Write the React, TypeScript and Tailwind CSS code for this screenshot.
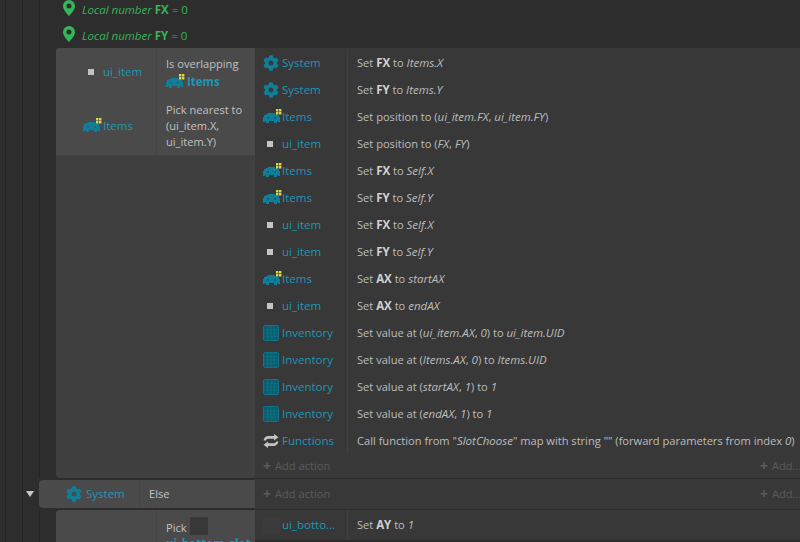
import React from 'react';
import { FaCog } from 'react-icons/fa';

const font = 'font-["Open_Sans","Noto_Sans",sans-serif]';

const Gear = () => <FaCog className="w-[16px] h-[16px] shrink-0 text-[#0f7f99]" />;

const Invader = ({ bg = '#383838' }: { bg?: string }) => (
  <svg viewBox="0 0 19 15" className="w-[19px] h-[15px] shrink-0">
    <path
      fill="#0f7f99"
      d="M5 4h7v1h2v1h2v2h1v5h-2v-1h-1v2h-3v-2H6v2H3v-2H2v1H0V8h1V6h2V5h2z"
    />
    <rect x="4" y="8" width="2" height="1.500" fill={bg} opacity="0.700" />
    <rect x="11" y="8" width="2" height="1.500" fill={bg} opacity="0.700" />
    <path fill="#d6d84a" d="M13 0h2.400v2.400H13zM16 0h2.400v2.400H16zM13 3h2.400v2.400H13zM16 3h2.400v2.400H16z" />
  </svg>
);

const Dot = () => (
  <span className="w-[14px] shrink-0 flex justify-center">
    <span className="w-[6px] h-[6px] bg-[#c4c4c4]" />
  </span>
);

const Grid = () => (
  <svg viewBox="0 0 16 16" className="w-[16px] h-[16px] shrink-0">
    <rect x="0.500" y="0.500" width="15" height="15" rx="1.500" fill="#0c5a6d" stroke="#0f7488" />
    <path stroke="#0f7488" strokeWidth="0.900" d="M4.800 1v14M8 1v14M11.200 1v14M1 4.800h14M1 8h14M1 11.200h14" />
  </svg>
);

const Loop = () => (
  <svg viewBox="0 0 16 14" className="w-[16px] h-[14px] shrink-0" fill="#c4c4c4">
    <path d="M11 0l4.500 3.200L11 6.400V4.700H5.500C4 4.700 3.100 5.400 2.600 6.800L.6 6.200C1.200 3.500 3 2 5.300 2H11z" />
    <path d="M5 14L.5 10.800 5 7.600v1.700h5.500c1.500 0 2.400-.7 2.900-2.100l2 .6C14.800 10.500 13 12 10.700 12H5z" />
  </svg>
);

type Obj = 'system' | 'items' | 'ui' | 'inv' | 'fn';

const objects: Record<Obj, { name: string; icon: React.ReactNode }> = {
  system: { name: 'System', icon: <Gear /> },
  items: { name: 'Items', icon: <Invader /> },
  ui: { name: 'ui_item', icon: <Dot /> },
  inv: { name: 'Inventory', icon: <Grid /> },
  fn: { name: 'Functions', icon: <Loop /> },
};

const B = ({ children }: { children: React.ReactNode }) => (
  <b className="font-bold text-[#d2d2d2] text-[11.500px]">{children}</b>
);
const I = ({ children }: { children: React.ReactNode }) => <i className="italic text-[11.500px]">{children}</i>;

const actions: { obj: Obj; text: React.ReactNode }[] = [
  { obj: 'system', text: <>Set <B>FX</B> to <I>Items.X</I></> },
  { obj: 'system', text: <>Set <B>FY</B> to <I>Items.Y</I></> },
  { obj: 'items', text: <>Set position to (<I>ui_item.FX</I>, <I>ui_item.FY</I>)</> },
  { obj: 'ui', text: <>Set position to (<I>FX</I>, <I>FY</I>)</> },
  { obj: 'items', text: <>Set <B>FX</B> to <I>Self.X</I></> },
  { obj: 'items', text: <>Set <B>FY</B> to <I>Self.Y</I></> },
  { obj: 'ui', text: <>Set <B>FX</B> to <I>Self.X</I></> },
  { obj: 'ui', text: <>Set <B>FY</B> to <I>Self.Y</I></> },
  { obj: 'items', text: <>Set <B>AX</B> to <I>startAX</I></> },
  { obj: 'ui', text: <>Set <B>AX</B> to <I>endAX</I></> },
  { obj: 'inv', text: <>Set value at (<I>ui_item.AX</I>, <I>0</I>) to <I>ui_item.UID</I></> },
  { obj: 'inv', text: <>Set value at (<I>Items.AX</I>, <I>0</I>) to <I>Items.UID</I></> },
  { obj: 'inv', text: <>Set value at (<I>startAX</I>, <I>1</I>) to <I>1</I></> },
  { obj: 'inv', text: <>Set value at (<I>endAX</I>, <I>1</I>) to <I>1</I></> },
  {
    obj: 'fn',
    text: <>Call function from "<I>SlotChoose</I>" map with string "" (forward parameters from index <I>0</I>)</>,
  },
];

const Guides = ({ wide = true }: { wide?: boolean }) => (
  <div className={`flex shrink-0 h-full ${wide ? 'w-[56px]' : 'w-[39px]'}`}>
    <div className="w-[6px] h-full border-r border-[#232323]" />
    <div className="w-[17px] h-full border-r border-[#232323]" />
    <div className={`h-full ${wide ? 'w-[17px] border-r border-[#232323]' : 'w-[16px]'}`} />
  </div>
);

const LocalVar = ({ name }: { name: string }) => (
  <div className="h-[26px] shrink-0 flex items-center">
    <Guides />
    <svg viewBox="0 0 12 16" className="w-[12px] h-[16px] ml-[7px] mb-[3px] shrink-0">
      <path
        fill="#35b65a"
        fillRule="evenodd"
        d="M6 0a6 6 0 0 1 6 6c0 3.600-4 8-6 10C4 14 0 9.600 0 6a6 6 0 0 1 6-6zm0 3.500a2.500 2.500 0 1 0 0 5 2.500 2.500 0 0 0 0-5z"
      />
    </svg>
    <span className="ml-[7px] pt-[2px] text-[#35b65a] text-[11.500px]">
      <i className="italic">Local number</i> <b className="font-bold">{name}</b> = 0
    </span>
  </div>
);

const ActionRow = ({ obj, text }: { obj: Obj; text: React.ReactNode }) => (
  <div className="h-[27px] flex items-center">
    <div className="w-[93px] h-full flex items-center pl-[8px] border-r border-[#404040] shrink-0">
      <span className="w-[19px] shrink-0 flex justify-start">{objects[obj].icon}</span>
      <span className="text-[#1c97b5] text-[11.500px]">{objects[obj].name}</span>
    </div>
    <div className="pl-[9px] whitespace-nowrap">{text}</div>
  </div>
);

const AddRow = () => (
  <div className="flex-1 flex items-center justify-between pl-[8px] pt-[1px] text-[#5a5a5a]">
    <span className="flex items-center">
      <span className="font-bold text-[14px] leading-none mr-[4px]">+</span>Add action
    </span>
    <span className="w-[40px] flex items-center overflow-hidden whitespace-nowrap">
      <span className="font-bold text-[14px] leading-none mr-[4px]">+</span>Add...
    </span>
  </div>
);

export default function App() {
  return (
    <div className={`w-[800px] h-[542px] overflow-hidden bg-[#2d2d2d] text-[#bdbdbd] text-[11.100px] ${font}`}>
      <div className="h-[22px] flex flex-col">
        <div className="-mt-[4px]">
          <LocalVar name="FX" />
        </div>
      </div>
      <LocalVar name="FY" />

      {/* main event */}
      <div className="h-[430px] flex">
        <Guides />
        <div className="w-[199px] shrink-0 flex flex-col rounded-l-sm bg-[#404040] overflow-hidden">
          <div className="h-[107px] bg-[#4a4a4a] flex">
            <div className="w-[101px] shrink-0 border-r border-[#444444] text-[11.500px]">
              <div className="h-[48px] flex items-center pl-[28px]">
                <Dot />
                <span className="ml-[5px] text-[#1c97b5]">ui_item</span>
              </div>
              <div className="h-[59px] flex items-center pl-[27px]">
                <Invader bg="#4a4a4a" />
                <span className="ml-[1px] text-[#1c97b5]">Items</span>
              </div>
            </div>
            <div className="pl-[9px] pt-[8px] leading-[16px] text-[#c2c2c2]">
              <div>Is overlapping</div>
              <div className="flex items-center h-[19px]">
                <Invader bg="#4a4a4a" />
                <b className="font-bold text-[#1c97b5] text-[11.500px] ml-[2px]">Items</b>
              </div>
              <div className="mt-[11px]">Pick nearest to</div>
              <div>(ui_item.X,</div>
              <div>ui_item.Y)</div>
            </div>
          </div>
        </div>
        <div className="flex-1 flex flex-col bg-[#383838] pt-[1px] min-w-0">
          {actions.map((a, i) => (
            <ActionRow key={i} obj={a.obj} text={a.text} />
          ))}
          <AddRow />
        </div>
      </div>

      {/* else */}
      <div className="h-[32px] flex">
        <div className="relative">
          <Guides wide={false} />
          <span className="absolute left-[26px] top-[13px] w-0 h-0 border-l-[4px] border-r-[4px] border-t-[6px] border-l-transparent border-r-transparent border-t-[#c8c8c8]" />
        </div>
        <div className="my-[2px] w-[216px] shrink-0 flex bg-[#4a4a4a] rounded-l-sm">
          <div className="w-[101px] shrink-0 flex items-center pl-[27px] border-r border-[#444444] text-[11.500px]">
            <Gear />
            <span className="ml-[4px] text-[#1c97b5]">System</span>
          </div>
          <div className="flex items-center pl-[9px] pt-[1px] text-[#c2c2c2]">Else</div>
        </div>
        <div className="flex-1 flex bg-[#383838] border-y border-[#2c2c2c]">
          <AddRow />
        </div>
      </div>

      {/* next event */}
      <div className="h-[32px] flex">
        <Guides />
        <div className="w-[199px] shrink-0 bg-[#4a4a4a] flex rounded-tl-sm">
          <div className="w-[101px] shrink-0 border-r border-[#444444]" />
          <div className="pl-[9px] pt-[7px] leading-[18px] text-[#c2c2c2]">
            <div className="flex items-end">
              <span className="leading-[14px]">Pick</span>
              <span className="ml-[3px] w-[18px] h-[18px] bg-[#383838]" />
            </div>
            <b className="font-bold text-[#1c97b5] text-[11.500px]">ui_bottom_slot</b>
          </div>
        </div>
        <div className="flex-1 bg-[#383838] flex h-[30px]">
          <div className="w-[93px] shrink-0 flex items-center pl-[8px] border-r border-[#404040] text-[#1c97b5] text-[11.500px] whitespace-nowrap">
            <span className="w-[17px] h-[17px] bg-[#3b3b3b] mr-[2px] shrink-0" />
            ui_botto...
          </div>
          <div className="pl-[9px] flex items-center">
            <span>
              Set <B>AY</B> to <I>1</I>
            </span>
          </div>
        </div>
      </div>
    </div>
  );
}
